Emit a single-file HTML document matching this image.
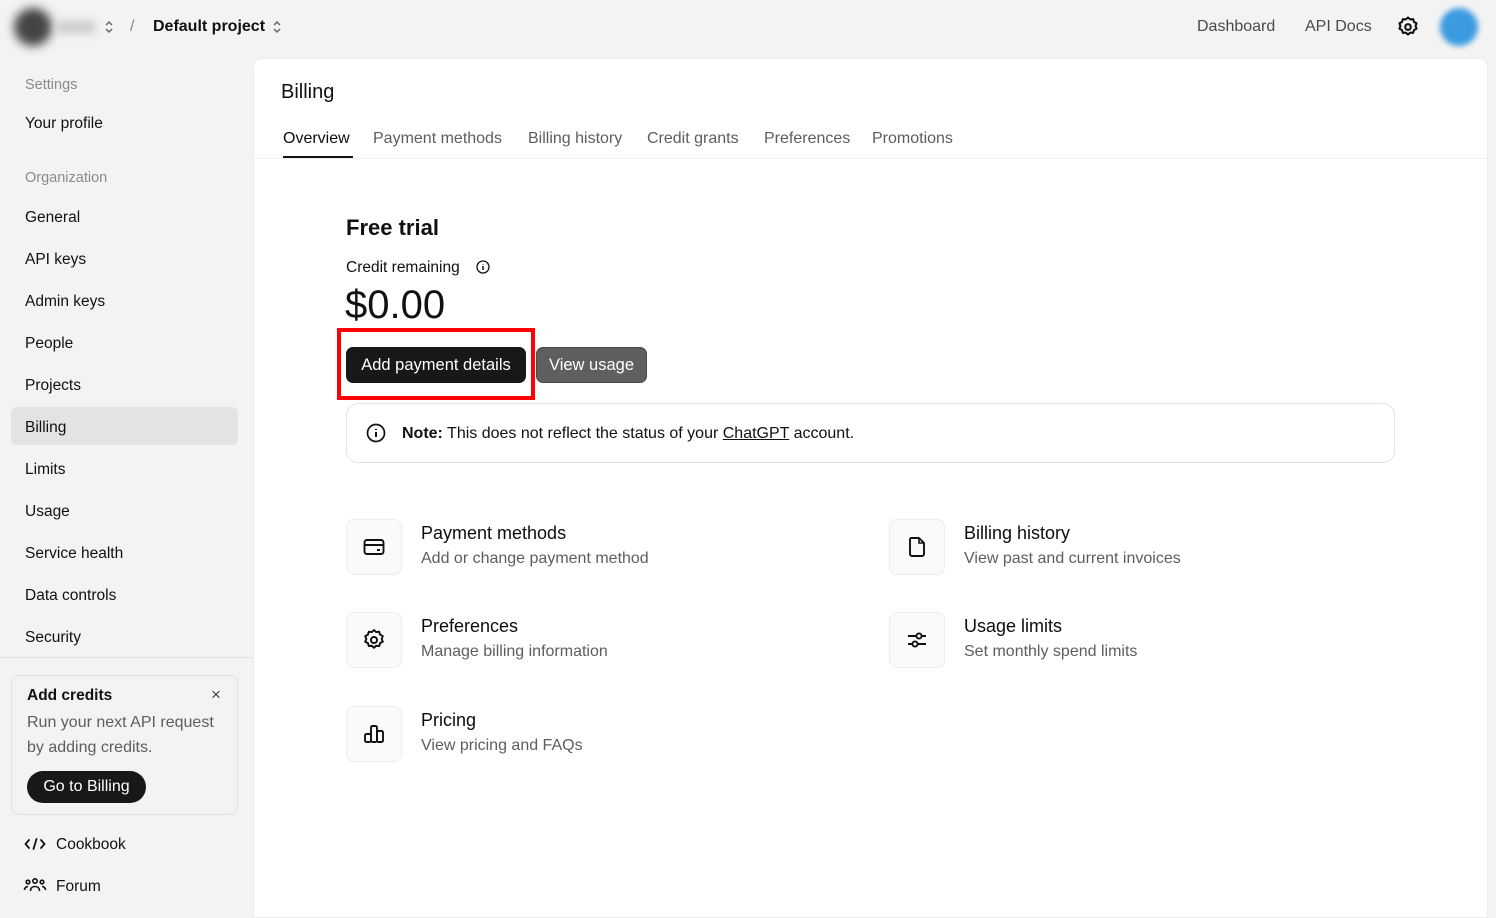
<!DOCTYPE html>
<html><head><meta charset="utf-8"><style>
*{box-sizing:border-box;margin:0;padding:0}
body{width:1496px;height:912px;overflow:hidden;background:#f3f3f3;font-family:"Liberation Sans",sans-serif;color:#0d0d0d;position:relative}
.a{position:absolute;white-space:nowrap}
.side{font-size:15.5px;color:#111}
.lbl{font-size:14.5px;color:#8a8a8a}
.tab{font-size:16px;color:#5d5d5d;top:130px}
.ib{position:absolute;width:56px;height:56px;border:1px solid #ececec;border-radius:8px;background:#fafafa;display:flex;align-items:center;justify-content:center}
.t1{font-size:18px;color:#0d0d0d}
.t2{font-size:16px;color:#5d5d5d}
svg{display:block}
</style></head><body>
<!-- top bar -->
<div class="a" style="left:14px;top:8px;width:38px;height:38px;border-radius:50%;background:#444;filter:blur(5px)"></div>
<div class="a" style="left:56px;top:20px;width:40px;height:14px;border-radius:6px;background:#cfcfcf;filter:blur(4px)"></div>
<svg class="a" style="left:103px;top:18px" width="12" height="18" viewBox="0 0 12 18"><path d="M3 7l3-3 3 3M3 11l3 3 3-3" fill="none" stroke="#666" stroke-width="1.5"/></svg>
<div class="a" style="left:130px;top:18px;font-size:16px;color:#888">/</div>
<div class="a" style="left:153px;top:18px;font-size:16px;font-weight:bold;color:#111">Default project</div>
<svg class="a" style="left:271px;top:18px" width="12" height="18" viewBox="0 0 12 18"><path d="M3 7l3-3 3 3M3 11l3 3 3-3" fill="none" stroke="#666" stroke-width="1.5"/></svg>
<div class="a" style="left:1197px;top:18px;font-size:16px;color:#4a4a4a">Dashboard</div>
<div class="a" style="left:1305px;top:18px;font-size:16px;color:#4a4a4a">API Docs</div>
<svg class="a" style="left:1395px;top:14px" width="26" height="26" viewBox="0 0 24 24"><path d="M12 3.2l2 1.8 2.7-.3.8 2.6 2.4 1.3-.9 2.5.9 2.5-2.4 1.3-.8 2.6-2.7-.3-2 1.8-2-1.8-2.7.3-.8-2.6-2.4-1.3.9-2.5-.9-2.5 2.4-1.3.8-2.6 2.7.3z" fill="none" stroke="#111" stroke-width="1.9" stroke-linejoin="round"/><circle cx="12" cy="12" r="2.6" fill="none" stroke="#111" stroke-width="1.9"/></svg>
<div class="a" style="left:1440px;top:8px;width:38px;height:38px;border-radius:50%;background:#3b9be0;filter:blur(3px)"></div>

<!-- sidebar -->
<div class="a lbl" style="left:25px;top:77px">Settings</div>
<div class="a side" style="left:25px;top:115px">Your profile</div>
<div class="a lbl" style="left:25px;top:170px">Organization</div>
<div class="a side" style="left:25px;top:209px">General</div>
<div class="a side" style="left:25px;top:251px">API keys</div>
<div class="a side" style="left:25px;top:293px">Admin keys</div>
<div class="a side" style="left:25px;top:335px">People</div>
<div class="a side" style="left:25px;top:377px">Projects</div>
<div class="a" style="left:11px;top:407px;width:227px;height:38px;background:#e3e3e3;border-radius:6px"></div>
<div class="a side" style="left:25px;top:419px">Billing</div>
<div class="a side" style="left:25px;top:461px">Limits</div>
<div class="a side" style="left:25px;top:503px">Usage</div>
<div class="a side" style="left:25px;top:545px">Service health</div>
<div class="a side" style="left:25px;top:587px">Data controls</div>
<div class="a side" style="left:25px;top:629px">Security</div>
<div class="a" style="left:0;top:657px;width:253px;height:1px;background:#e2e2e2"></div>
<div class="a" style="left:11px;top:675px;width:227px;height:140px;border:1px solid #e2e2e2;border-radius:8px"></div>
<div class="a" style="left:27px;top:687px;font-size:15.5px;font-weight:bold;color:#111">Add credits</div>
<div class="a" style="left:211px;top:685px;font-size:17px;color:#444">×</div>
<div class="a" style="left:27px;top:711px;font-size:16px;color:#5d5d5d;line-height:24.5px;white-space:normal;width:205px">Run your next API request by adding credits.</div>
<div class="a" style="left:27px;top:771px;width:119px;height:32px;border-radius:16px;background:#181818;color:#fff;font-size:16px;line-height:32px;text-align:center">Go to Billing</div>
<svg class="a" style="left:24px;top:837px" width="22" height="14" viewBox="0 0 22 14"><path d="M5 3L1.5 7 5 11M17 3l3.5 4L17 11M12.5 2l-3 10" fill="none" stroke="#111" stroke-width="1.8" stroke-linecap="round" stroke-linejoin="round"/></svg>
<div class="a side" style="left:56px;top:836px">Cookbook</div>
<svg class="a" style="left:23px;top:877px" width="24" height="16" viewBox="0 0 24 16"><g fill="none" stroke="#111" stroke-width="1.6"><circle cx="12" cy="4" r="2.2"/><circle cx="5" cy="5" r="1.8"/><circle cx="19" cy="5" r="1.8"/><path d="M7.5 14c0-3 2-4.5 4.5-4.5s4.5 1.5 4.5 4.5M1.5 13c0-2 1.5-3.5 3.5-3.5M22.5 13c0-2-1.5-3.5-3.5-3.5"/></g></svg>
<div class="a side" style="left:56px;top:878px">Forum</div>

<!-- main panel -->
<div class="a" style="left:253px;top:58px;width:1235px;height:860px;background:#fff;border-radius:8px 8px 0 0;border:1px solid #ececec"></div>
<div class="a" style="left:281px;top:81px;font-size:20px;color:#111">Billing</div>
<div class="a tab" style="left:283px;color:#0d0d0d">Overview</div>
<div class="a" style="left:283px;top:156px;width:70px;height:2px;background:#111"></div>
<div class="a tab" style="left:373px">Payment methods</div>
<div class="a tab" style="left:528px">Billing history</div>
<div class="a tab" style="left:647px">Credit grants</div>
<div class="a tab" style="left:764px">Preferences</div>
<div class="a tab" style="left:872px">Promotions</div>
<div class="a" style="left:254px;top:158px;width:1233px;height:1px;background:#efefef"></div>

<div class="a" style="left:346px;top:215px;font-size:22px;font-weight:bold;color:#111">Free trial</div>
<div class="a" style="left:346px;top:259px;font-size:15.5px;color:#111">Credit remaining</div>
<svg class="a" style="left:476px;top:260px" width="14" height="14" viewBox="0 0 14 14"><circle cx="7" cy="7" r="6" fill="none" stroke="#111" stroke-width="1.3"/><path d="M7 6v4M7 4v.5" stroke="#111" stroke-width="1.5"/></svg>
<div class="a" style="left:345px;top:283px;font-size:40px;color:#111">$0.00</div>

<div class="a" style="left:337px;top:328px;width:198px;height:72px;border:4px solid #f00"></div>
<div class="a" style="left:346px;top:347px;width:180px;height:36px;background:#181818;border-radius:7px;color:#fff;font-size:16.5px;line-height:37px;text-align:center">Add payment details</div>
<div class="a" style="left:536px;top:347px;width:111px;height:36px;background:#5f5f5f;border:1px solid #4a4a4a;border-radius:7px;color:#fff;font-size:16.5px;line-height:35px;text-align:center">View usage</div>

<div class="a" style="left:346px;top:403px;width:1049px;height:60px;border:1px solid #e4e4e4;border-radius:12px"></div>
<svg class="a" style="left:366px;top:423px" width="20" height="20" viewBox="0 0 20 20"><circle cx="10" cy="10" r="8.5" fill="none" stroke="#111" stroke-width="1.7"/><path d="M10 9v5M10 6v1" stroke="#111" stroke-width="2"/></svg>
<div class="a" style="left:402px;top:425px;font-size:16px;color:#111"><b>Note:</b> This does not reflect the status of your <u>ChatGPT</u> account.</div>

<!-- cards -->
<div class="ib" style="left:346px;top:519px"><svg width="24" height="24" viewBox="0 0 24 24"><rect x="2.5" y="5" width="19" height="14" rx="2.5" fill="none" stroke="#111" stroke-width="1.9"/><path d="M2.5 10h19M15 15h3" stroke="#111" stroke-width="1.9"/></svg></div>
<div class="a t1" style="left:421px;top:523px">Payment methods</div>
<div class="a t2" style="left:421px;top:550px">Add or change payment method</div>

<div class="ib" style="left:889px;top:519px"><svg width="24" height="24" viewBox="0 0 24 24"><path d="M6 3h8l5 5v11a2 2 0 0 1-2 2H7a2 2 0 0 1-2-2V5a2 2 0 0 1 1-2z" fill="none" stroke="#111" stroke-width="1.9" stroke-linejoin="round"/><path d="M14 3v5h5" fill="none" stroke="#111" stroke-width="1.6"/></svg></div>
<div class="a t1" style="left:964px;top:523px">Billing history</div>
<div class="a t2" style="left:964px;top:550px">View past and current invoices</div>

<div class="ib" style="left:346px;top:612px"><svg width="26" height="26" viewBox="0 0 24 24"><path d="M12 2.8l2 1.9 2.8-.3.8 2.7 2.5 1.3-1 2.6 1 2.6-2.5 1.3-.8 2.7-2.8-.3-2 1.9-2-1.9-2.8.3-.8-2.7-2.5-1.3 1-2.6-1-2.6 2.5-1.3.8-2.7 2.8.3z" fill="none" stroke="#111" stroke-width="1.8" stroke-linejoin="round"/><circle cx="12" cy="12" r="2.8" fill="none" stroke="#111" stroke-width="1.8"/></svg></div>
<div class="a t1" style="left:421px;top:616px">Preferences</div>
<div class="a t2" style="left:421px;top:643px">Manage billing information</div>

<div class="ib" style="left:889px;top:612px"><svg width="24" height="24" viewBox="0 0 24 24"><g fill="none" stroke="#111" stroke-width="1.9"><path d="M3 8h8M17 8h4M3 16h4M13 16h8"/><circle cx="14" cy="8" r="2.6"/><circle cx="10" cy="16" r="2.6"/></g></svg></div>
<div class="a t1" style="left:964px;top:616px">Usage limits</div>
<div class="a t2" style="left:964px;top:643px">Set monthly spend limits</div>

<div class="ib" style="left:346px;top:706px"><svg width="24" height="24" viewBox="0 0 24 24"><g fill="none" stroke="#111" stroke-width="1.9" stroke-linejoin="round"><rect x="3" y="12" width="6" height="8" rx="1.5"/><rect x="9" y="4" width="6" height="16" rx="1.5"/><rect x="15" y="9" width="6" height="11" rx="1.5"/></g></svg></div>
<div class="a t1" style="left:421px;top:710px">Pricing</div>
<div class="a t2" style="left:421px;top:737px">View pricing and FAQs</div>
</body></html>
